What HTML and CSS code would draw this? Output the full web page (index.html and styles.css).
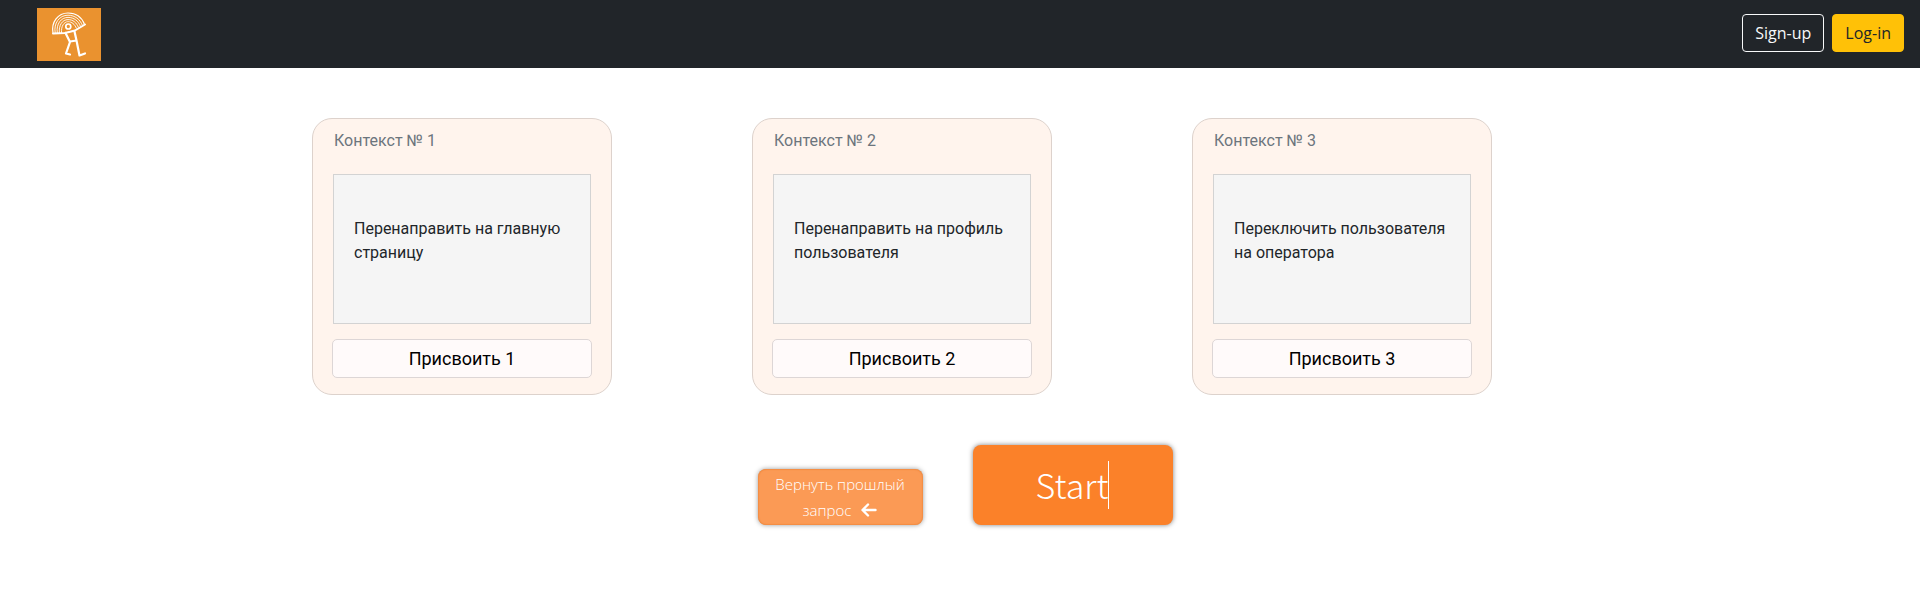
FILE: index.html
```html
<!DOCTYPE html>
<html lang="ru">
<head>
<meta charset="utf-8">
<meta name="viewport" content="width=device-width, initial-scale=1">
<title>Контексты</title>
<link rel="stylesheet" href="styles.css">
</head>
<body>
<header class="topbar">
  <a class="logo" href="#" aria-label="Главная">
    <svg viewBox="0 0 64 53" width="64" height="53" aria-hidden="true">
      <rect width="64" height="53" fill="#ea922f"/>
      <path d="M16 25C14 14 21 5 31 5C39 5 45 9.500 47.500 16.500" fill="none" stroke="#fff" stroke-width="1.200"/>
      <path d="M18.200 25C16.500 15 22.500 7.200 31 7.200C38 7.200 43 11.500 45.500 17.500" fill="none" stroke="#fff" stroke-width="0.900"/>
      <path d="M20.300 25C19 16 24 9.400 31 9.400C37 9.400 41.500 13 43.500 18.500" fill="none" stroke="#fff" stroke-width="0.900"/>
      <path d="M22.400 25C21.500 17 25.500 11.600 31 11.600C36 11.600 39.500 14.500 41.500 19.500" fill="none" stroke="#fff" stroke-width="0.900"/>
      <path d="M24.500 25C24 18 27 13.800 31 13.800C35 13.800 37.500 16 39.500 20.500" fill="none" stroke="#fff" stroke-width="0.900"/>
      <path d="M16 25.500L28 25L38 22.500L48 16.500" fill="none" stroke="#fff" stroke-width="2" stroke-linejoin="round" stroke-linecap="round"/>
      <circle cx="31.300" cy="18.500" r="4.200" fill="#ea922f"/>
      <circle cx="31.300" cy="18.500" r="2.500" fill="none" stroke="#fff" stroke-width="1.700"/>
      <path d="M28.500 25L33 34L29 45.500L33 46.500M37.500 23.500L39.500 32.500L42.500 47.500L48 45.500M33 33.500L39.500 32.500" fill="none" stroke="#fff" stroke-width="2.200" stroke-linejoin="round" stroke-linecap="round"/>
    </svg>
  </a>
  <nav class="auth">
    <button class="btn btn-outline" type="button">Sign-up</button>
    <button class="btn btn-login" type="button">Log-in</button>
  </nav>
</header>
<main class="container">
  <div class="cards">
    <article class="card">
      <h2 class="card-title">Контекст № 1</h2>
      <p class="card-text">Перенаправить на главную страницу</p>
      <button class="assign" type="button">Присвоить 1</button>
    </article>
    <article class="card">
      <h2 class="card-title">Контекст № 2</h2>
      <p class="card-text">Перенаправить на профиль пользователя</p>
      <button class="assign" type="button">Присвоить 2</button>
    </article>
    <article class="card">
      <h2 class="card-title">Контекст № 3</h2>
      <p class="card-text">Переключить пользователя на оператора</p>
      <button class="assign" type="button">Присвоить 3</button>
    </article>
  </div>
  <div class="actions">
    <button class="back" type="button">Вернуть прошлый запрос
      <svg class="arrow" viewBox="0 0 16 14" width="16" height="14" aria-hidden="true"><path d="M7 1.500L1.500 7L7 12.500M2 7H14.500" fill="none" stroke="#fff" stroke-width="2.400" stroke-linecap="round" stroke-linejoin="round"/></svg>
    </button>
    <button class="start" type="button"><span class="typed">Start</span></button>
  </div>
</main>
</body>
</html>
```
FILE: styles.css
```css
* {
  box-sizing: border-box;
}

body {
  margin: 0;
  background: #fff;
  color: #212529;
  font: 16px/24px Roboto, sans-serif;
}

button {
  cursor: pointer;
}

.topbar {
  display: flex;
  align-items: flex-start;
  justify-content: space-between;
  padding: 8px 16px 7px 37px;
  background: #212529;
}

.logo,
.logo svg {
  display: block;
}

.auth {
  display: flex;
  gap: 8px;
  padding-top: 6px;
}

.btn {
  padding: 6px 12px;
  border: 1px solid;
  border-radius: 4px;
  font: 16px/24px "Open Sans", sans-serif;
}

.btn-outline {
  border-color: #f8f9fa;
  background: transparent;
  color: #f8f9fa;
}

.btn-login {
  border-color: #ffc107;
  background: #ffc107;
  color: #212529;
}

.container {
  max-width: 1320px;
  margin: 0 auto;
  padding: 50px 12px 40px;
}

.cards {
  display: grid;
  grid-template-columns: repeat(auto-fit, minmax(300px, 1fr));
  gap: 24px;
}

.card {
  max-width: 300px;
  padding: 10px 19px 16px;
  border: 1px solid #ddd2cc;
  border-radius: 20px;
  background: #fff4ed;
}

.card-title {
  margin: 0 2px 21px;
  color: #6c757d;
  font-size: 16px;
  font-weight: 400;
  line-height: 24px;
}

.card-text {
  min-height: 150px;
  margin: 0 1px 15px;
  padding: 42px 16px 20px 20px;
  border: 1px solid #d3d3d3;
  background: #f5f5f5;
}

.assign {
  display: block;
  width: 100%;
  padding: 5px 12px;
  border: 1px solid #ddd6d6;
  border-radius: 5px;
  background: #fffafa;
  color: #000;
  font: 18px/27px Roboto, sans-serif;
}

.actions {
  display: flex;
  flex-wrap: wrap;
  align-items: flex-end;
  justify-content: center;
  gap: 50px;
  padding: 50px 0 0 10px;
}

.back,
.start {
  border: 0;
  border-radius: 8px;
  color: #fff;
}

.back {
  width: 165px;
  padding: 2px 12px;
  background: #fb9a55;
  box-shadow: 0 0 5px rgba(0, 0, 0, 0.4), inset 0 0 2px #e0701c;
  font: 300 15px/26px "Open Sans", sans-serif;
}

.arrow {
  margin-left: 6px;
  vertical-align: -1px;
}

.start {
  width: 200px;
  padding: 16px;
  background: #fb8129;
  box-shadow: 0 0 5px rgba(0, 0, 0, 0.5);
  font: 300 34px/48px "Noto Sans CJK JP", sans-serif;
}

.typed {
  display: block;
  width: fit-content;
  margin: 0 auto;
  border-right: 1px solid #fff;
}
```
